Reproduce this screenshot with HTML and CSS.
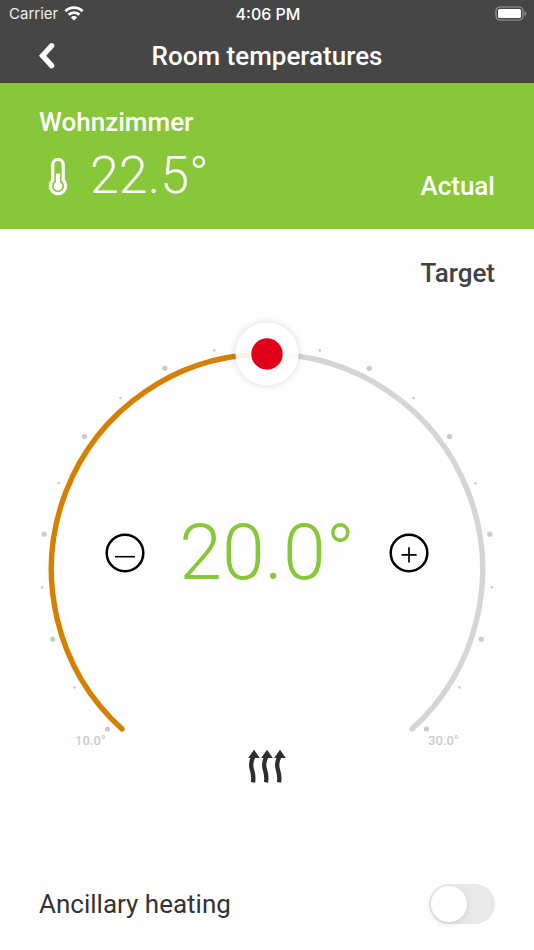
FILE: index.html
```html
<!DOCTYPE html>
<html lang="en">
<head>
<meta charset="utf-8">
<meta name="viewport" content="width=device-width, initial-scale=1">
<title>Room temperatures</title>
<link rel="stylesheet" href="styles.css">
</head>
<body>
<header class="top">
  <div class="status">
    <div class="carrier">
      <span>Carrier</span>
      <svg width="20" height="16" viewBox="0 0 20 16" aria-hidden="true">
        <g fill="none" stroke="#fff" stroke-width="2.8">
          <path d="M1.400 5.200a12.200 12.200 0 0 1 17.200 0"/>
          <path d="M4.600 8.800a7.700 7.700 0 0 1 10.800 0"/>
        </g>
        <path d="M10 14.600 6.800 11.400a4.500 4.500 0 0 1 6.400 0z" fill="#fff"/>
      </svg>
    </div>
    <time class="time">4:06 PM</time>
    <svg class="battery" width="32" height="16" viewBox="0 0 32 16" aria-hidden="true">
      <rect x="1" y="1" width="27" height="13" rx="4" fill="none" stroke="#9a9a9a" stroke-width="1.2"/>
      <rect x="3" y="3" width="23" height="9" rx="1.500" fill="#fff"/>
      <path d="M29.600 5.200q1.600.8 1.600 2.400t-1.600 2.400z" fill="#9a9a9a"/>
    </svg>
  </div>
  <div class="nav">
    <button class="back" type="button" aria-label="Back">
      <svg width="17" height="28" viewBox="0 0 17 28" aria-hidden="true">
        <path d="M13.600 3.800 4.600 13.700l9 9.900" fill="none" stroke="#fff" stroke-width="5.400" stroke-linecap="round" stroke-linejoin="miter"/>
      </svg>
    </button>
    <h1 class="title">Room temperatures</h1>
  </div>
</header>
<main>
  <section class="actual">
    <h2 class="label">Wohnzimmer</h2>
    <div class="reading">
      <svg width="20" height="42" viewBox="0 0 20 42" aria-hidden="true">
        <path d="M4.800 25.300V9.600a5.200 5.200 0 0 1 10.400 0V25.300a7.700 7.700 0 1 1-10.400 0z" fill="none" stroke="#fff" stroke-width="3.200"/>
        <path d="M7.900 18.500h4.200v9a4.300 4.300 0 1 1-4.200 0z" fill="#fff"/>
      </svg>
      <span class="now">22.5°</span>
      <span class="label side">Actual</span>
    </div>
  </section>
  <h2 class="label target">Target</h2>
  <section class="dial">
    <svg class="ring" viewBox="0 310 534 490" role="img" aria-label="Target temperature between 10 and 30 degrees">
      <defs>
        <filter id="glow" x="-50%" y="-50%" width="200%" height="200%">
          <feGaussianBlur stdDeviation="3"/>
        </filter>
      </defs>
      <g fill="none" stroke-width="5.400" stroke-linecap="round">
        <path d="M412 729A215.500 215.500 0 0 0 267 354" stroke="#d5d5d5"/>
        <path d="M122 729A215.500 215.500 0 0 1 267 354" stroke="#d58000"/>
      </g>
      <g fill="#cbcbcb">
        <circle cx="107.500" cy="729" r="2.600"/><circle cx="426.500" cy="729" r="2.600"/>
        <circle cx="52.700" cy="639.200" r="2.600"/><circle cx="481.300" cy="639.200" r="2.600"/>
        <circle cx="44.200" cy="534.200" r="2.600"/><circle cx="489.800" cy="534.200" r="2.600"/>
        <circle cx="84.500" cy="436.600" r="2.600"/><circle cx="449.500" cy="436.600" r="2.600"/>
        <circle cx="164.800" cy="368.300" r="2.600"/><circle cx="369.200" cy="368.300" r="2.600"/>
        <circle cx="74.600" cy="687.400" r="1.300"/><circle cx="459.400" cy="687.400" r="1.300"/>
        <circle cx="42.200" cy="587.200" r="1.300"/><circle cx="491.800" cy="587.200" r="1.300"/>
        <circle cx="58.600" cy="483.200" r="1.300"/><circle cx="475.400" cy="483.200" r="1.300"/>
        <circle cx="120.500" cy="398" r="1.300"/><circle cx="413.500" cy="398" r="1.300"/>
        <circle cx="214.200" cy="350.400" r="1.300"/><circle cx="319.800" cy="350.400" r="1.300"/>
      </g>
      <g class="ends">
        <text x="75" y="745">10.0°</text>
        <text x="428" y="745">30.0°</text>
      </g>
      <circle cx="267" cy="354" r="33" fill="#000" opacity=".1" filter="url(#glow)"/>
      <circle cx="267" cy="354" r="31.500" fill="#fff"/>
      <path d="M236 356.400Q251 354.500 267 354" fill="none" stroke="#fbf2e5" stroke-width="5"/>
      <path d="M267 354Q283 354.500 298 356.400" fill="none" stroke="#fbfbfb" stroke-width="5"/>
      <circle cx="267" cy="354" r="15.700" fill="#e1001a"/>
      <g id="wave">
        <path d="M254 749.700l5.800 8.300h-11.600z" fill="#2d2d2d"/>
        <path d="M253.600 756C250.600 762 250.600 766 252 770Q254 776 253 782.300" fill="none" stroke="#2d2d2d" stroke-width="4.300"/>
      </g>
      <use href="#wave" x="13"/>
      <use href="#wave" x="26"/>
    </svg>
    <div class="controls">
      <button class="step" type="button" aria-label="Decrease">
        <svg viewBox="0 0 40 40" fill="none" stroke="#000" aria-hidden="true">
          <circle cx="20" cy="20" r="18.300" stroke-width="2.500"/>
          <path d="M10 23.700h20" stroke-width="1.600"/>
        </svg>
      </button>
      <output class="set">20.0°</output>
      <button class="step" type="button" aria-label="Increase">
        <svg viewBox="0 0 40 40" fill="none" stroke="#000" aria-hidden="true">
          <circle cx="20" cy="20" r="18.300" stroke-width="2.500"/>
          <path d="M12.600 21.800h15M20 14.200v15.400" stroke-width="1.700"/>
        </svg>
      </button>
    </div>
  </section>
  <div class="option">
    <label for="ancillary">Ancillary heating</label>
    <input class="switch" id="ancillary" type="checkbox" role="switch">
  </div>
</main>
</body>
</html>
```
FILE: styles.css
```css
* { box-sizing: border-box; }

body {
  margin: 0;
  background: #fefefe;
  color: #414244;
  font-family: Roboto, "Liberation Sans", sans-serif;
}

h1, h2 { margin: 0; font-weight: 500; }

button { padding: 0; border: 0; background: none; cursor: pointer; }

svg { display: block; }

.top { background: #464646; color: #fff; }

.status {
  display: grid;
  grid-template-columns: 1fr auto 1fr;
  align-items: center;
  height: 28px;
  padding: 0 7px 0 9px;
  font: 400 15px/28px Inter, sans-serif;
}

.carrier { display: flex; align-items: center; gap: 6px; color: #eee; }

.time { font-size: 16px; font-weight: 500; }

.battery { justify-self: end; }

.nav {
  display: grid;
  grid-template-columns: 40px 1fr 40px;
  align-items: center;
  height: 55px;
  padding: 0 38px;
}

.title { text-align: center; font-size: 26px; line-height: 32px; }

.actual {
  padding: 23px 39px 16px;
  background: #88c73a;
  color: #fff;
}

.label { font-size: 26px; line-height: 32px; font-weight: 500; }

.reading { display: flex; align-items: center; height: 75px; }

.reading svg { margin-left: 9px; }

.now {
  margin-left: 22px;
  font-size: 52px;
  line-height: 60px;
  font-weight: 300;
}

.side { margin-left: auto; padding-top: 20px; }

.target { padding: 28px 39px 0; text-align: right; }

.dial { display: grid; margin-top: 21px; }

.ring, .controls { grid-area: 1 / 1; }

.ring { width: 100%; }

.ends { font-size: 13px; font-weight: 500; fill: #cbcbcb; }

.controls {
  display: flex;
  align-self: center;
  align-items: center;
  justify-content: space-between;
  padding: 0 105px 4px;
}

.step { width: 40px; height: 40px; }

.set {
  color: #88c73a;
  font-size: 77px;
  line-height: 96px;
  font-weight: 300;
}

.option {
  display: flex;
  align-items: center;
  justify-content: space-between;
  padding: 84px 39px 24px;
  color: #333;
  font-size: 26px;
  line-height: 40px;
}

.switch {
  appearance: none;
  width: 66px;
  height: 40px;
  margin: 0;
  padding: 2px;
  border-radius: 20px;
  background: #e9e9eb;
  cursor: pointer;
}

.switch::before {
  content: "";
  display: block;
  width: 36px;
  height: 36px;
  border-radius: 50%;
  background: #fff;
  box-shadow: 0 2px 6px rgba(0, 0, 0, .12);
}

.switch:checked { background: #88c73a; }

.switch:checked::before { margin-left: auto; }
```
